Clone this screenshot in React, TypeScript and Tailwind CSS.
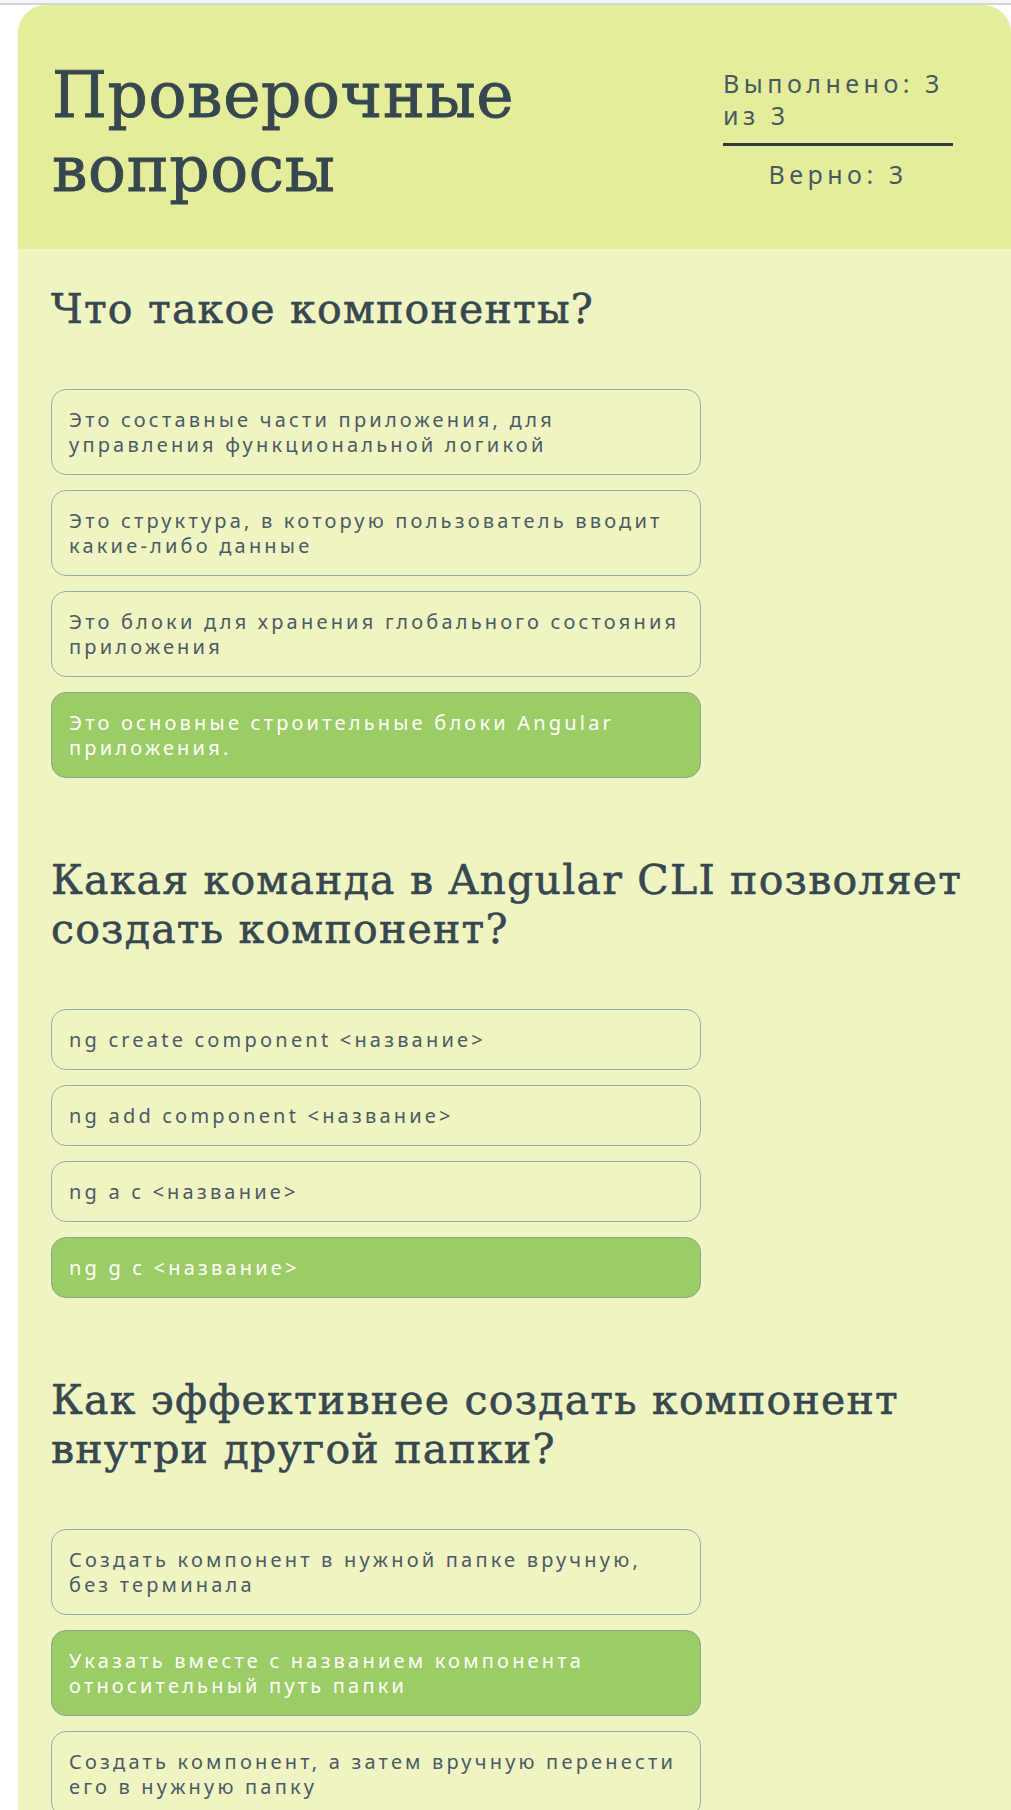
import React from "react";

type Question = {
  title: string;
  answers: { text: string; correct?: boolean }[];
};

const questions: Question[] = [
  {
    title: "Что такое компоненты?",
    answers: [
      { text: "Это составные части приложения, для управления функциональной логикой" },
      { text: "Это структура, в которую пользователь вводит какие-либо данные" },
      { text: "Это блоки для хранения глобального состояния приложения" },
      { text: "Это основные строительные блоки Angular приложения.", correct: true },
    ],
  },
  {
    title: "Какая команда в Angular CLI позволяет создать компонент?",
    answers: [
      { text: "ng create component <название>" },
      { text: "ng add component <название>" },
      { text: "ng a c <название>" },
      { text: "ng g c <название>", correct: true },
    ],
  },
  {
    title: "Как эффективнее создать компонент внутри другой папки?",
    answers: [
      { text: "Создать компонент в нужной папке вручную, без терминала" },
      { text: "Указать вместе с названием компонента относительный путь папки", correct: true },
      { text: "Создать компонент, а затем вручную перенести его в нужную папку" },
    ],
  },
];

const slab = { fontFamily: '"DejaVu Serif", serif' };
const sans = { fontFamily: '"Noto Sans", sans-serif' };

const App: React.FC = () => {
  return (
    <div className="min-h-screen bg-white overflow-hidden">
      <div className="h-[5px] bg-[#f6f6f6] border-b-2 border-[#d4d6d4]" />
      <div className="pl-[18px]">
        <div className="rounded-t-[28px] overflow-hidden bg-[#f0f4c3] min-h-[1805px]">
          {/* header */}
          <div className="h-[244px] bg-[#e6ed9a] flex justify-between pl-[34px] pr-[58px] pt-[54px]">
            <h1
              className="text-[63px] leading-[74px] text-[#37474f] tracking-[0.01em] [-webkit-text-stroke:0.9px_#37474f]"
              style={slab}
            >
              Проверочные
              <br />
              вопросы
            </h1>
            <div className="w-[230px] pt-[8px] text-[#455a64]" style={sans}>
              <p className="text-[25px] leading-[32px] tracking-[0.18em]">Выполнено: 3 из 3</p>
              <div className="h-[3px] bg-[#2f3d42] mt-[12px] mb-[12px]" />
              <p className="text-[25px] leading-[32px] tracking-[0.18em] text-center">Верно: 3</p>
            </div>
          </div>

          {/* questions */}
          <div className="pl-[33px] pt-[36px] flex flex-col gap-[78px]">
            {questions.map((q) => (
              <section key={q.title}>
                <h2
                  className="text-[41px] leading-[49px] text-[#37474f] tracking-[0.03em] max-w-[940px] mb-[55px] [-webkit-text-stroke:0.6px_#37474f]"
                  style={slab}
                >
                  {q.title}
                </h2>
                <div className="flex flex-col gap-[15px] w-[650px]">
                  {q.answers.map((a) => (
                    <div
                      key={a.text}
                      className={
                        a.correct
                          ? "rounded-[15px] border border-[#8fa39b] bg-[#9ccc65] text-white px-[17px] py-[17px] text-[20px] leading-[25px] tracking-[0.16em]"
                          : "rounded-[15px] border border-[#9aabb0] text-[#4a5b62] px-[17px] py-[17px] text-[20px] leading-[25px] tracking-[0.16em]"
                      }
                      style={sans}
                    >
                      {a.text}
                    </div>
                  ))}
                </div>
              </section>
            ))}
          </div>
        </div>
      </div>
    </div>
  );
};

export default App;
